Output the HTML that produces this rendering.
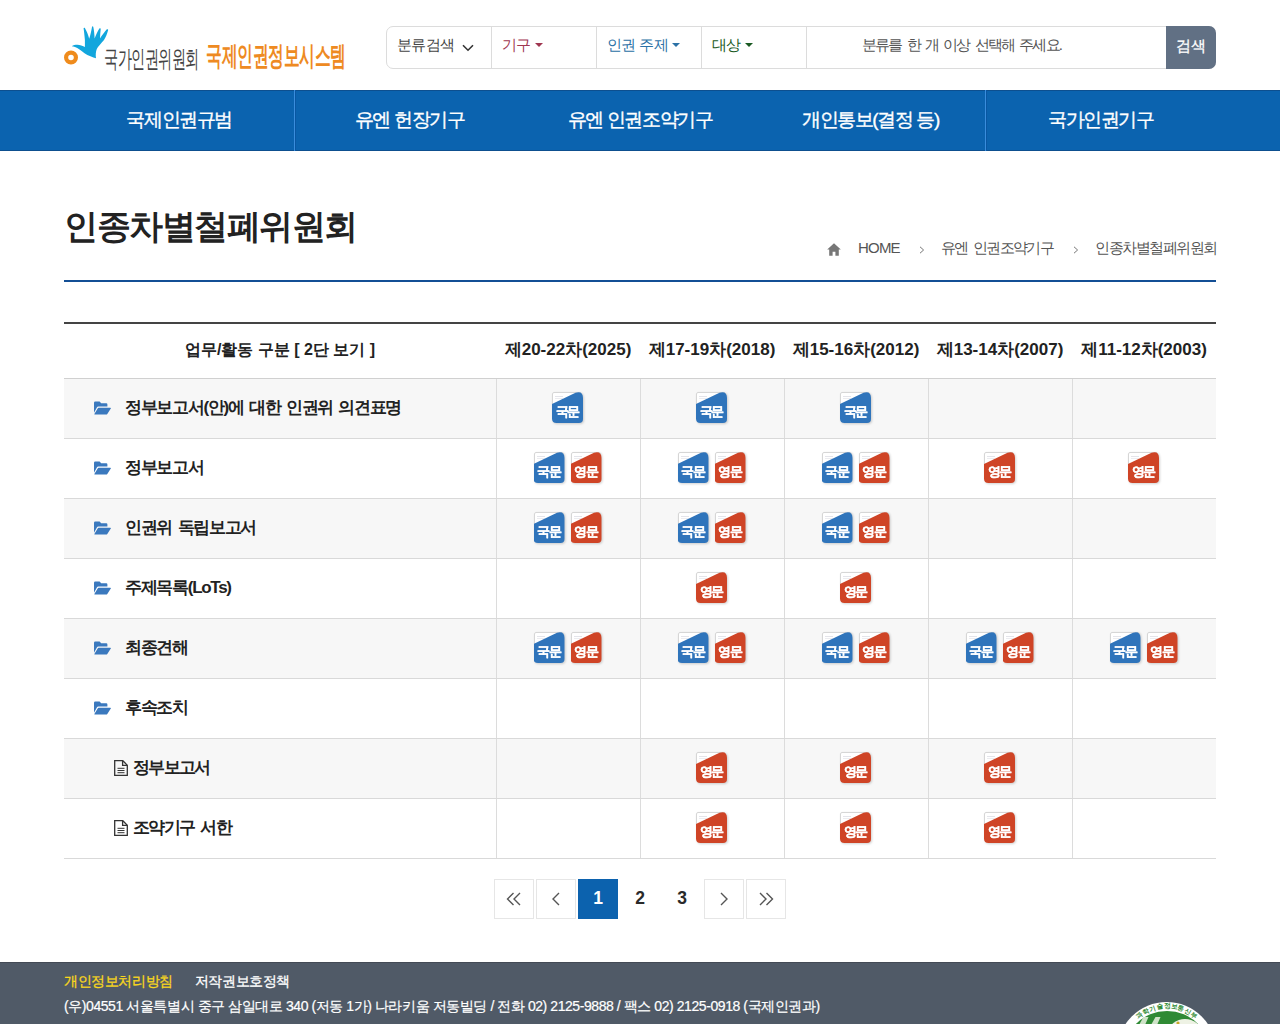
<!DOCTYPE html>
<html lang="ko">
<head>
<meta charset="utf-8">
<style>
*{box-sizing:border-box;margin:0;padding:0}
html,body{width:1280px;height:1024px;overflow:hidden;background:#fff;font-family:"Liberation Sans",sans-serif;color:#222}
#hdr{position:absolute;left:0;top:0;width:1280px;height:90px;background:#fff}
#search{position:absolute;left:386px;top:26px;width:830px;height:43px;border:1px solid #dcdcdc;border-radius:7px;background:#fff}
#search .cell{position:absolute;top:0;height:41px;border-right:1px solid #dcdcdc;font-size:15px;line-height:36px;letter-spacing:-0.6px}
#search .btn{position:absolute;right:-1px;top:-1px;width:50px;height:43px;background:#617084;color:#fff;border-radius:0 7px 7px 0;font-size:15px;line-height:40px;text-align:center;letter-spacing:-0.3px;-webkit-text-stroke:0.3px #fff}
.caret{display:inline-block;width:0;height:0;border-left:4px solid transparent;border-right:4px solid transparent;border-top:4px solid currentColor;vertical-align:middle;margin-left:4px;position:relative;top:-1px}
#nav{position:absolute;left:0;top:90px;width:1280px;height:61px;background:#0b63af;border-top:1px solid #0d4f8f;border-bottom:1px solid #0d4f8f}
#nav .it{position:absolute;top:-1px;height:61px;width:230.4px;text-align:center;color:#fff;font-size:19px;line-height:59px;letter-spacing:-1.4px;-webkit-text-stroke:0.35px #fff}
#nav .sep{position:absolute;top:-1px;width:1px;height:61px;background:#3a8ddc;box-shadow:1px 0 0 #0957a2}
#title{position:absolute;left:64px;top:198px;font-size:34px;font-weight:bold;color:#222;line-height:56px;letter-spacing:-1.5px}
#bc{position:absolute;left:0;top:0;font-size:15px;color:#555;white-space:nowrap}
#bc span{position:absolute;top:237px;line-height:22px}
#hline{position:absolute;left:64px;top:280px;width:1152px;height:2px;background:#134f95}
#tbl{position:absolute;left:64px;top:322px;width:1152px;border-top:2px solid #444}
.row{position:relative;height:60px;border-bottom:1px solid #d9d9d9}
.row.g{background:#f7f7f7}
.row.h{height:55px;background:#fff;border-bottom-color:#d0d0d0}
.c0{position:absolute;left:0;top:0;width:432px;height:100%}
.cc{position:absolute;top:0;width:144px;height:100%;border-left:1px solid #dcdcdc;text-align:center}
.h .cc{border-left:none}
.hd{font-size:17px;font-weight:bold;line-height:52px;color:#222;text-align:center}
.c0.hd{font-size:16px}
.lbl{position:absolute;left:61px;top:-1px;line-height:59px;font-size:17px;font-weight:bold;color:#222;letter-spacing:-1.3px;word-spacing:2px}
.sub .lbl{left:69px;letter-spacing:-1.7px;word-spacing:3px}
.fold{position:absolute;left:30px;top:22px;width:17px;height:14px}
.file{position:absolute;left:50px;top:21px;width:14px;height:16px}
.ic{position:relative;left:-1px;display:inline-block;width:31px;height:31px;margin:13px 3px 0;vertical-align:top;filter:drop-shadow(1px 1px 1px rgba(0,0,0,0.18))}
.ic::before{content:"";position:absolute;left:0;top:0;width:28px;height:24px;background:#fff;border:1px solid #d6d6d6;border-radius:2px}
.ic::after{content:"";position:absolute;left:0;top:0;width:31px;height:31px;background:#2f74bb;clip-path:path('M0 12L23.5 0.8Q31 -1.2 31 6V27Q31 31 27 31H4.5Q0 31 0 26.5Z')}
.ic.e::after{background:#cf4426}
.ic b{position:absolute;z-index:1;left:0;right:0;top:13px;text-align:center;color:#fff;font-size:13px;line-height:14px;font-weight:bold;letter-spacing:-1.3px;-webkit-text-stroke:0.2px #fff}
.ic i{position:absolute;left:3px;top:4px;width:8px;height:1px;background:#e4e4ea;box-shadow:0 2px 0 #ececf0}
#pg{position:absolute;left:494px;top:879px;height:40px}
#pg .b{position:absolute;top:0;width:40px;height:40px;border:1px solid #e6e6e6;background:#fff}
#pg .n{position:absolute;top:0;width:40px;height:40px;text-align:center;line-height:39px;font-size:17.5px;font-weight:bold;color:#2a2a2a}
#pg .act{background:#0c62ae;color:#fff}
#ftr{position:absolute;left:0;top:962px;width:1280px;height:62px;background:#505a67;border-top:1px solid #434a55}
#ftr .l1{position:absolute;left:64px;top:7px;font-size:14px;line-height:22px;color:#fff;letter-spacing:-0.4px;-webkit-text-stroke:0.3px #fff}
#ftr .l1 .y{color:#f9d71c;-webkit-text-stroke:0.3px #f9d71c;margin-right:22px}
#ftr .l2{position:absolute;left:64px;top:32px;font-size:14px;line-height:22px;color:#fff;letter-spacing:-0.43px;-webkit-text-stroke:0.2px #fff}
</style>
</head>
<body>
<svg width="0" height="0" style="position:absolute">
<defs>
<g id="fo" fill="#3b79be"><path d="M0 1.2Q0 0 1.2 0H5.6L7.2 1.8H12.3Q13.4 1.8 13.4 2.9V5H4.2Q3.4 5 3 5.7L0 11.2Z"/><path d="M4.6 6.3H16.4Q17.3 6.3 16.8 7.1L13.3 12.4Q12.9 13 12.1 13H0.9Q0.1 13 0.5 12.3L3.7 6.9Q4 6.3 4.6 6.3Z"/></g>
<g id="fi" fill="none" stroke="#333" stroke-width="1.3"><path d="M0.7 0.7H8.8L13.3 5.2V15.3H0.7Z"/><path d="M8.6 0.9V5.4H13.1"/><path d="M3.5 8.3H10.5M3.5 10.5H10.5M3.5 12.7H10.5" stroke-width="1"/></g>
</defs></svg>
<div id="hdr">
  <svg id="logo" width="300" height="60" viewBox="64 20 300 60" style="position:absolute;left:64px;top:20px">
<circle cx="71" cy="57.5" r="4.9" fill="none" stroke="#ef8b1c" stroke-width="4.2"/>
<path fill="#12a6dd" d="M71.8 46.2C74 44.8 78 44.4 81.2 45.4C82.8 45.9 84 46.5 84.9 47L84.9 40C84.5 36 84 31 83.6 28.6C83.5 27.6 84.4 27.4 85 28.2C86.8 31.5 88.3 35 89.2 38.8C90.5 35 91.5 30 92 27C92.2 26 93.1 26 93.3 27C94.1 30.5 94.5 35 94.6 38.6C96 35 97.8 31 99.4 28.6C99.9 27.9 100.9 28.2 100.7 29C100.4 32 100.1 35.5 100 38.6C102 35.5 104.5 32 106.6 29.6C107.3 28.9 108.4 29.3 108.1 30.2C107.1 34 105.5 37.5 104 40C101 43.5 98 46.5 96.8 49C95.8 51.5 95.5 55 96 58.2C93 57.5 88 55.5 84.5 53.2C81 50.5 78 48 75 47C73.8 46.6 72.8 46.4 71.8 46.2Z"/>
<text x="104" y="67" font-size="14" fill="#444" textLength="95" lengthAdjust="spacingAndGlyphs" transform="translate(0 67) scale(1 1.68) translate(0 -67)" font-family="Liberation Sans">국가인권위원회</text>
<text x="206" y="65.1" font-size="16" font-weight="bold" fill="#ee8a22" textLength="140" lengthAdjust="spacingAndGlyphs" transform="translate(0 65.1) scale(1 1.67) translate(0 -65.1)" font-family="Liberation Sans">국제인권정보시스템</text>
</svg>
  <div id="search">
    <div class="cell" style="left:0;width:105px;padding-left:10px;color:#444">분류검색<svg style="position:absolute;left:75px;top:17px" width="12" height="8" viewBox="0 0 12 8"><path d="M1 1.2L6 6.2L11 1.2" fill="none" stroke="#333" stroke-width="1.6"/></svg></div>
    <div class="cell" style="left:105px;width:105px;padding-left:10px;color:#9f3650">기구<span class="caret"></span></div>
    <div class="cell" style="left:210px;width:105px;padding-left:10px;color:#2b71a6">인권 주제<span class="caret"></span></div>
    <div class="cell" style="left:315px;width:105px;padding-left:10px;color:#1a5a22">대상<span class="caret"></span></div>
    <div class="cell" style="left:475px;width:300px;border:none;color:#555;letter-spacing:-1.9px;word-spacing:3px">분류를 한 개 이상 선택해 주세요.</div>
    <div class="btn">검색</div>
  </div>
</div>
<div id="nav">
  <div class="it" style="left:64px">국제인권규범</div>
  <div class="sep" style="left:294px"></div>
  <div class="it" style="left:294.4px">유엔 헌장기구</div>
  <div class="it" style="left:524.8px">유엔 인권조약기구</div>
  <div class="it" style="left:755.2px">개인통보(결정 등)</div>
  <div class="sep" style="left:985px"></div>
  <div class="it" style="left:985.6px">국가인권기구</div>
</div>
<div id="title">인종차별철폐위원회</div>
<div id="bc">
<svg style="position:absolute;left:827px;top:243px" width="14" height="13" viewBox="0 0 14 13"><path d="M7 0.3L0.2 6.6H2.2V12.7H5.6V8.8H8.4V12.7H11.8V6.6H13.8Z" fill="#777"/></svg>
<span style="left:858px;letter-spacing:-0.8px">HOME</span>
<svg style="position:absolute;left:919px;top:246px" width="6" height="8" viewBox="0 0 6 8"><path d="M1 0.8L4.6 4L1 7.2" fill="none" stroke="#777" stroke-width="1"/></svg>
<span style="left:941px;letter-spacing:-1.7px;word-spacing:3px">유엔 인권조약기구</span>
<svg style="position:absolute;left:1073px;top:246px" width="6" height="8" viewBox="0 0 6 8"><path d="M1 0.8L4.6 4L1 7.2" fill="none" stroke="#777" stroke-width="1"/></svg>
<span style="left:1095px;letter-spacing:-1.5px">인종차별철폐위원회</span>
</div>
<div id="hline"></div>
<div id="tbl">
<div class="row h"><div class="c0 hd">업무/활동 구분 [ 2단 보기 ]</div><div class="cc hd" style="left:432px">제20-22차(2025)</div><div class="cc hd" style="left:576px">제17-19차(2018)</div><div class="cc hd" style="left:720px">제15-16차(2012)</div><div class="cc hd" style="left:864px">제13-14차(2007)</div><div class="cc hd" style="left:1008px">제11-12차(2003)</div></div>
<div class="row g"><div class="c0"><svg class="fold" viewBox="0 0 17 13"><use href="#fo"/></svg><span class="lbl">정부보고서(안)에 대한 인권위 의견표명</span></div><div class="cc" style="left:432px"><span class="ic k"><i></i><b>국문</b></span></div><div class="cc" style="left:576px"><span class="ic k"><i></i><b>국문</b></span></div><div class="cc" style="left:720px"><span class="ic k"><i></i><b>국문</b></span></div><div class="cc" style="left:864px"></div><div class="cc" style="left:1008px"></div></div>
<div class="row"><div class="c0"><svg class="fold" viewBox="0 0 17 13"><use href="#fo"/></svg><span class="lbl">정부보고서</span></div><div class="cc" style="left:432px"><span class="ic k"><i></i><b>국문</b></span><span class="ic e"><i></i><b>영문</b></span></div><div class="cc" style="left:576px"><span class="ic k"><i></i><b>국문</b></span><span class="ic e"><i></i><b>영문</b></span></div><div class="cc" style="left:720px"><span class="ic k"><i></i><b>국문</b></span><span class="ic e"><i></i><b>영문</b></span></div><div class="cc" style="left:864px"><span class="ic e"><i></i><b>영문</b></span></div><div class="cc" style="left:1008px"><span class="ic e"><i></i><b>영문</b></span></div></div>
<div class="row g"><div class="c0"><svg class="fold" viewBox="0 0 17 13"><use href="#fo"/></svg><span class="lbl">인권위 독립보고서</span></div><div class="cc" style="left:432px"><span class="ic k"><i></i><b>국문</b></span><span class="ic e"><i></i><b>영문</b></span></div><div class="cc" style="left:576px"><span class="ic k"><i></i><b>국문</b></span><span class="ic e"><i></i><b>영문</b></span></div><div class="cc" style="left:720px"><span class="ic k"><i></i><b>국문</b></span><span class="ic e"><i></i><b>영문</b></span></div><div class="cc" style="left:864px"></div><div class="cc" style="left:1008px"></div></div>
<div class="row"><div class="c0"><svg class="fold" viewBox="0 0 17 13"><use href="#fo"/></svg><span class="lbl">주제목록(LoTs)</span></div><div class="cc" style="left:432px"></div><div class="cc" style="left:576px"><span class="ic e"><i></i><b>영문</b></span></div><div class="cc" style="left:720px"><span class="ic e"><i></i><b>영문</b></span></div><div class="cc" style="left:864px"></div><div class="cc" style="left:1008px"></div></div>
<div class="row g"><div class="c0"><svg class="fold" viewBox="0 0 17 13"><use href="#fo"/></svg><span class="lbl">최종견해</span></div><div class="cc" style="left:432px"><span class="ic k"><i></i><b>국문</b></span><span class="ic e"><i></i><b>영문</b></span></div><div class="cc" style="left:576px"><span class="ic k"><i></i><b>국문</b></span><span class="ic e"><i></i><b>영문</b></span></div><div class="cc" style="left:720px"><span class="ic k"><i></i><b>국문</b></span><span class="ic e"><i></i><b>영문</b></span></div><div class="cc" style="left:864px"><span class="ic k"><i></i><b>국문</b></span><span class="ic e"><i></i><b>영문</b></span></div><div class="cc" style="left:1008px"><span class="ic k"><i></i><b>국문</b></span><span class="ic e"><i></i><b>영문</b></span></div></div>
<div class="row"><div class="c0"><svg class="fold" viewBox="0 0 17 13"><use href="#fo"/></svg><span class="lbl">후속조치</span></div><div class="cc" style="left:432px"></div><div class="cc" style="left:576px"></div><div class="cc" style="left:720px"></div><div class="cc" style="left:864px"></div><div class="cc" style="left:1008px"></div></div>
<div class="row g sub"><div class="c0"><svg class="file" viewBox="0 0 14 16"><use href="#fi"/></svg><span class="lbl">정부보고서</span></div><div class="cc" style="left:432px"></div><div class="cc" style="left:576px"><span class="ic e"><i></i><b>영문</b></span></div><div class="cc" style="left:720px"><span class="ic e"><i></i><b>영문</b></span></div><div class="cc" style="left:864px"><span class="ic e"><i></i><b>영문</b></span></div><div class="cc" style="left:1008px"></div></div>
<div class="row sub"><div class="c0"><svg class="file" viewBox="0 0 14 16"><use href="#fi"/></svg><span class="lbl">조약기구 서한</span></div><div class="cc" style="left:432px"></div><div class="cc" style="left:576px"><span class="ic e"><i></i><b>영문</b></span></div><div class="cc" style="left:720px"><span class="ic e"><i></i><b>영문</b></span></div><div class="cc" style="left:864px"><span class="ic e"><i></i><b>영문</b></span></div><div class="cc" style="left:1008px"></div></div>

</div>
<div id="pg">
<div class="b" style="left:0"><svg width="40" height="40" viewBox="0 0 40 40" style="position:absolute;left:-1px;top:-1px"><path d="M19.5 14L13.5 20L19.5 26M26 14L20 20L26 26" fill="none" stroke="#555" stroke-width="1.4"/></svg></div>
<div class="b" style="left:42px"><svg width="40" height="40" viewBox="0 0 40 40" style="position:absolute;left:-1px;top:-1px"><path d="M23 14L17 20L23 26" fill="none" stroke="#555" stroke-width="1.4"/></svg></div>
<div class="n act" style="left:84px">1</div>
<div class="n" style="left:126px">2</div>
<div class="n" style="left:168px">3</div>
<div class="b" style="left:210px"><svg width="40" height="40" viewBox="0 0 40 40" style="position:absolute;left:-1px;top:-1px"><path d="M17 14L23 20L17 26" fill="none" stroke="#555" stroke-width="1.4"/></svg></div>
<div class="b" style="left:252px"><svg width="40" height="40" viewBox="0 0 40 40" style="position:absolute;left:-1px;top:-1px"><path d="M14 14L20 20L14 26M20.5 14L26.5 20L20.5 26" fill="none" stroke="#555" stroke-width="1.4"/></svg></div>
</div>
<div id="ftr">
  <div class="l1"><span class="y">개인정보처리방침</span>저작권보호정책</div>
  <svg style="position:absolute;left:1100px;top:38px" width="140" height="24" viewBox="1100 1000 140 24">
<defs><path id="arc" d="M1126 1040A42 42 0 0 1 1208 1040"/></defs>
<circle cx="1166.7" cy="1050.5" r="49.5" fill="#fff"/>
<circle cx="1167" cy="1054" r="44" fill="#2f8a34"/>
<path d="M1139 1024L1143.5 1016H1148.5L1145 1024ZM1151 1024L1155.5 1016H1160.5L1157 1024Z" fill="#cfe3c8"/>
<ellipse cx="1185" cy="1031" rx="16" ry="13" fill="#eef2e4"/>
<circle cx="1178" cy="1022" r="1.6" fill="#c9a72a"/>
<text font-size="6.5" fill="#2f8a34" font-family="Liberation Sans" font-weight="bold"><textPath href="#arc" startOffset="50%" text-anchor="middle">과학기술정보통신부</textPath></text>
</svg>
  <div class="l2">(우)04551 서울특별시 중구 삼일대로 340 (저동 1가) 나라키움 저동빌딩 / 전화 02) 2125-9888 / 팩스 02) 2125-0918 (국제인권과)</div>
</div>
</body>
</html>
